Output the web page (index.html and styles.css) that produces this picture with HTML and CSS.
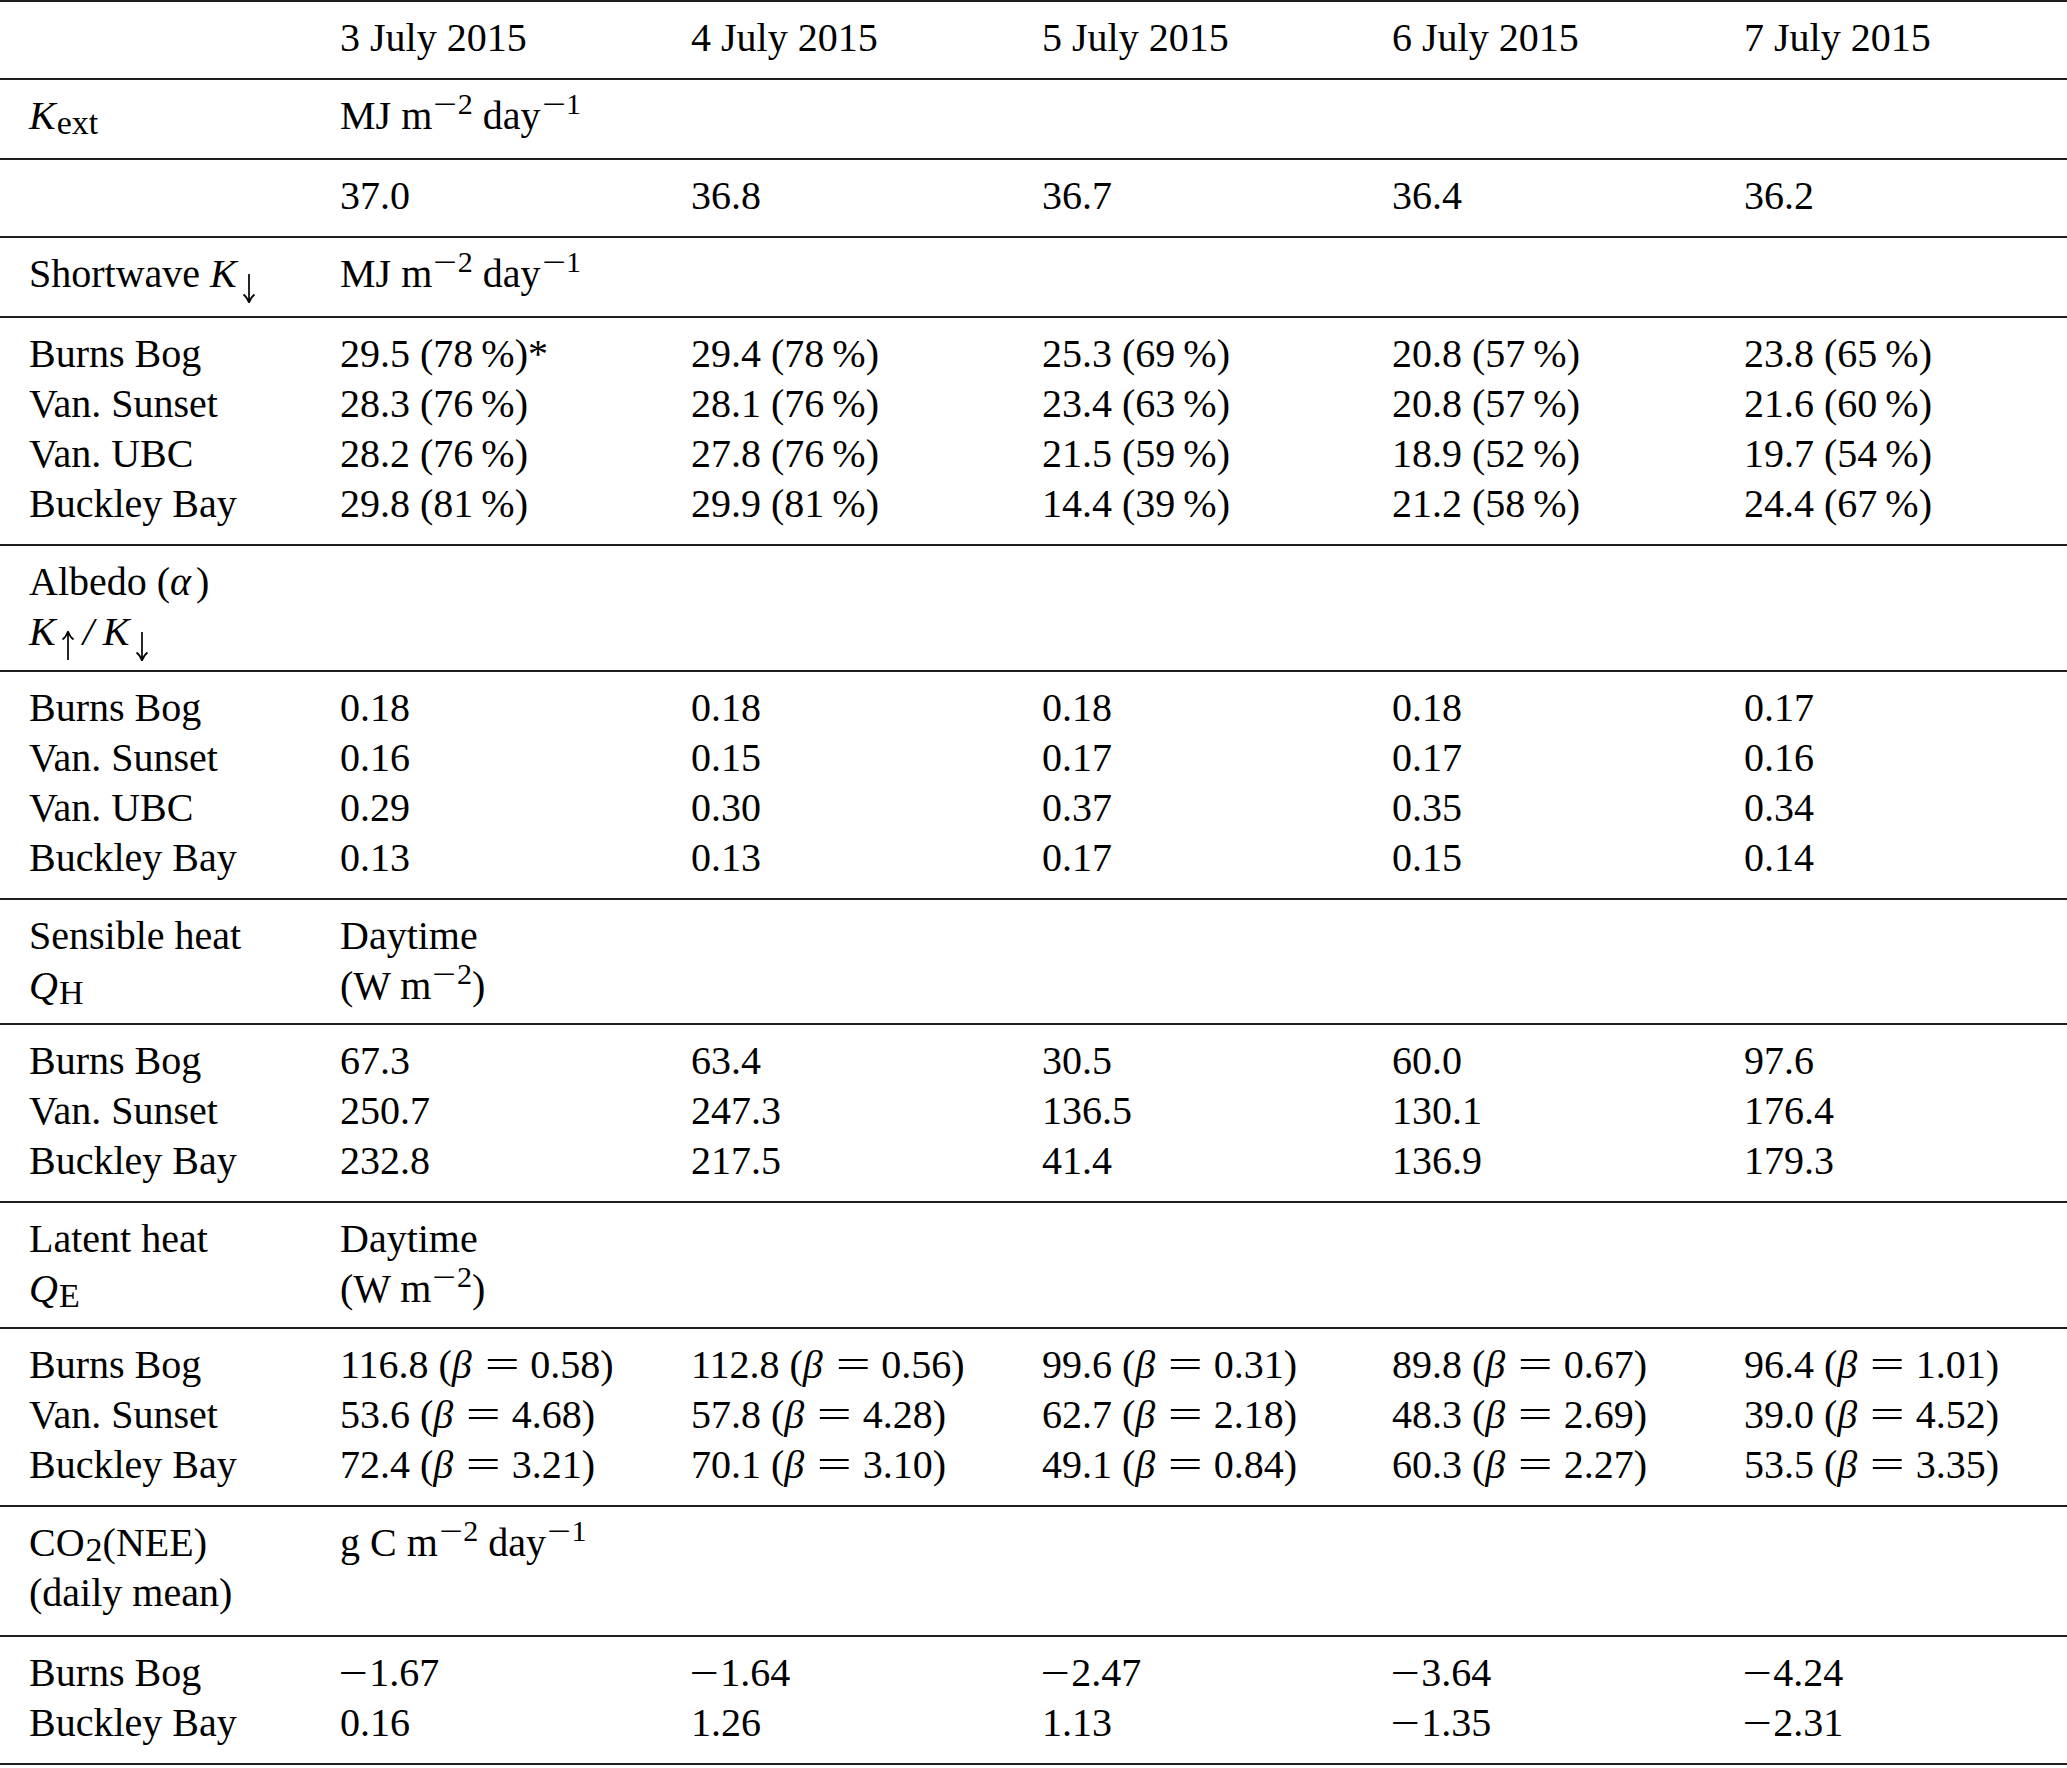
FILE: index.html
```html
<!DOCTYPE html>
<html lang="en">
<head>
<meta charset="utf-8">
<title>Energy balance table</title>
<link rel="stylesheet" href="styles.css">
</head>
<body>
<table class="tbl">
  <colgroup>
    <col class="c0"><col class="c1"><col class="c2"><col class="c3"><col class="c4"><col class="c5">
  </colgroup>
  <tbody class="grp">
    <tr><td></td><td>3 July 2015</td><td>4 July 2015</td><td>5 July 2015</td><td>6 July 2015</td><td>7 July 2015</td></tr>
  </tbody>
  <tbody class="grp u">
    <tr><td><i>K</i><span class="sub">ext</span></td><td>MJ m<span class="sup"><span class="sm">−</span>2</span> day<span class="sup"><span class="sm">−</span>1</span></td><td></td><td></td><td></td><td></td></tr>
  </tbody>
  <tbody class="grp">
    <tr><td></td><td>37.0</td><td>36.8</td><td>36.7</td><td>36.4</td><td>36.2</td></tr>
  </tbody>
  <tbody class="grp u">
    <tr><td>Shortwave <i>K</i><svg class="arr" width="22" height="30" viewBox="0 0 22 30" aria-label="down"><path d="M12 1 V29 M6.5 21.5 Q10 24 12 29.5 Q14 24 17.5 21.5" fill="none" stroke="#000" stroke-width="1.7"/></svg></td><td>MJ m<span class="sup"><span class="sm">−</span>2</span> day<span class="sup"><span class="sm">−</span>1</span></td><td></td><td></td><td></td><td></td></tr>
  </tbody>
  <tbody class="grp">
    <tr><td>Burns Bog</td><td>29.5 (78&thinsp;%)*</td><td>29.4 (78&thinsp;%)</td><td>25.3 (69&thinsp;%)</td><td>20.8 (57&thinsp;%)</td><td>23.8 (65&thinsp;%)</td></tr>
    <tr><td>Van. Sunset</td><td>28.3 (76&thinsp;%)</td><td>28.1 (76&thinsp;%)</td><td>23.4 (63&thinsp;%)</td><td>20.8 (57&thinsp;%)</td><td>21.6 (60&thinsp;%)</td></tr>
    <tr><td>Van. UBC</td><td>28.2 (76&thinsp;%)</td><td>27.8 (76&thinsp;%)</td><td>21.5 (59&thinsp;%)</td><td>18.9 (52&thinsp;%)</td><td>19.7 (54&thinsp;%)</td></tr>
    <tr><td>Buckley Bay</td><td>29.8 (81&thinsp;%)</td><td>29.9 (81&thinsp;%)</td><td>14.4 (39&thinsp;%)</td><td>21.2 (58&thinsp;%)</td><td>24.4 (67&thinsp;%)</td></tr>
  </tbody>
  <tbody class="grp h2">
    <tr><td>Albedo (<i class="al">α</i>)<br><i>K</i><svg class="arr" width="22" height="30" viewBox="0 0 22 30" aria-label="up"><path d="M12 29 V1 M6.5 8.5 Q10 6 12 0.5 Q14 6 17.5 8.5" fill="none" stroke="#000" stroke-width="1.7"/></svg><i class="slash">/</i><i>K</i><svg class="arr" width="22" height="30" viewBox="0 0 22 30" aria-label="down"><path d="M12 1 V29 M6.5 21.5 Q10 24 12 29.5 Q14 24 17.5 21.5" fill="none" stroke="#000" stroke-width="1.7"/></svg></td><td></td><td></td><td></td><td></td><td></td></tr>
  </tbody>
  <tbody class="grp">
    <tr><td>Burns Bog</td><td>0.18</td><td>0.18</td><td>0.18</td><td>0.18</td><td>0.17</td></tr>
    <tr><td>Van. Sunset</td><td>0.16</td><td>0.15</td><td>0.17</td><td>0.17</td><td>0.16</td></tr>
    <tr><td>Van. UBC</td><td>0.29</td><td>0.30</td><td>0.37</td><td>0.35</td><td>0.34</td></tr>
    <tr><td>Buckley Bay</td><td>0.13</td><td>0.13</td><td>0.17</td><td>0.15</td><td>0.14</td></tr>
  </tbody>
  <tbody class="grp h2">
    <tr><td>Sensible heat<br><i>Q</i><span class="sub">H</span></td><td>Daytime<br>(W m<span class="sup"><span class="sm">−</span>2</span>)</td><td></td><td></td><td></td><td></td></tr>
  </tbody>
  <tbody class="grp">
    <tr><td>Burns Bog</td><td>67.3</td><td>63.4</td><td>30.5</td><td>60.0</td><td>97.6</td></tr>
    <tr><td>Van. Sunset</td><td>250.7</td><td>247.3</td><td>136.5</td><td>130.1</td><td>176.4</td></tr>
    <tr><td>Buckley Bay</td><td>232.8</td><td>217.5</td><td>41.4</td><td>136.9</td><td>179.3</td></tr>
  </tbody>
  <tbody class="grp h2">
    <tr><td>Latent heat<br><i>Q</i><span class="sub">E</span></td><td>Daytime<br>(W m<span class="sup"><span class="sm">−</span>2</span>)</td><td></td><td></td><td></td><td></td></tr>
  </tbody>
  <tbody class="grp">
    <tr><td>Burns Bog</td><td>116.8 (<i class="b">β</i><span class="eq">=</span>0.58)</td><td>112.8 (<i class="b">β</i><span class="eq">=</span>0.56)</td><td>99.6 (<i class="b">β</i><span class="eq">=</span>0.31)</td><td>89.8 (<i class="b">β</i><span class="eq">=</span>0.67)</td><td>96.4 (<i class="b">β</i><span class="eq">=</span>1.01)</td></tr>
    <tr><td>Van. Sunset</td><td>53.6 (<i class="b">β</i><span class="eq">=</span>4.68)</td><td>57.8 (<i class="b">β</i><span class="eq">=</span>4.28)</td><td>62.7 (<i class="b">β</i><span class="eq">=</span>2.18)</td><td>48.3 (<i class="b">β</i><span class="eq">=</span>2.69)</td><td>39.0 (<i class="b">β</i><span class="eq">=</span>4.52)</td></tr>
    <tr><td>Buckley Bay</td><td>72.4 (<i class="b">β</i><span class="eq">=</span>3.21)</td><td>70.1 (<i class="b">β</i><span class="eq">=</span>3.10)</td><td>49.1 (<i class="b">β</i><span class="eq">=</span>0.84)</td><td>60.3 (<i class="b">β</i><span class="eq">=</span>2.27)</td><td>53.5 (<i class="b">β</i><span class="eq">=</span>3.35)</td></tr>
  </tbody>
  <tbody class="grp u">
    <tr><td>CO<span class="sub">2</span>(NEE)<br>(daily mean)</td><td>g C m<span class="sup"><span class="sm">−</span>2</span> day<span class="sup"><span class="sm">−</span>1</span></td><td></td><td></td><td></td><td></td></tr>
  </tbody>
  <tbody class="grp">
    <tr><td>Burns Bog</td><td><span class="neg">−</span>1.67</td><td><span class="neg">−</span>1.64</td><td><span class="neg">−</span>2.47</td><td><span class="neg">−</span>3.64</td><td><span class="neg">−</span>4.24</td></tr>
    <tr><td>Buckley Bay</td><td>0.16</td><td>1.26</td><td>1.13</td><td><span class="neg">−</span>1.35</td><td><span class="neg">−</span>2.31</td></tr>
  </tbody>
</table>
</body>
</html>
```

FILE: styles.css
```css
html, body {
  margin: 0;
  padding: 0;
  background: #ffffff;
}

body {
  font-family: "Liberation Serif", "Times New Roman", serif;
  font-size: 40px;
  line-height: 50px;
  color: #000000;
}

.tbl {
  width: 2067px;
  table-layout: fixed;
  border-collapse: collapse;
  border-top: 2px solid #1e1e1e;
}

.c0 { width: 311px; }
.c1 { width: 351px; }
.c2 { width: 351px; }
.c3 { width: 350px; }
.c4 { width: 352px; }
.c5 { width: 352px; }

.grp {
  border-bottom: 2px solid #1e1e1e;
}

.tbl td {
  padding: 0 0 0 29px;
  vertical-align: top;
  white-space: nowrap;
}

.grp tr:first-child td {
  padding-top: 11px;
}

.grp tr:last-child td {
  padding-bottom: 15px;
}

.grp.u tr:last-child td {
  padding-bottom: 17px;
}

.grp.h2 tr:last-child td {
  padding-bottom: 12.5px;
}

.tbl i {
  font-style: italic;
}

.sub {
  font-size: 0.85em;
  line-height: 0;
  vertical-align: -0.16em;
  margin-left: 1px;
}

.sup {
  font-size: 0.75em;
  line-height: 0;
  vertical-align: 0.5em;
  margin-left: 2px;
}

.sm {
  display: inline-block;
  margin: 0 0.12em 0 0.1em;
  transform: scaleX(1.4);
}

.arr {
  display: inline;
  vertical-align: -8px;
  margin-bottom: -8px;
}

.slash {
  padding: 0 9px 0 5px;
}

.al {
  margin-right: 0.12em;
}

.b {
  margin-right: 0.06em;
}

.eq {
  display: inline-block;
  margin: 0 0.42em;
  transform: scaleX(1.55);
}

.neg {
  display: inline-block;
  margin: 0 0.12em 0 0.05em;
  transform: scaleX(1.3);
}
```
